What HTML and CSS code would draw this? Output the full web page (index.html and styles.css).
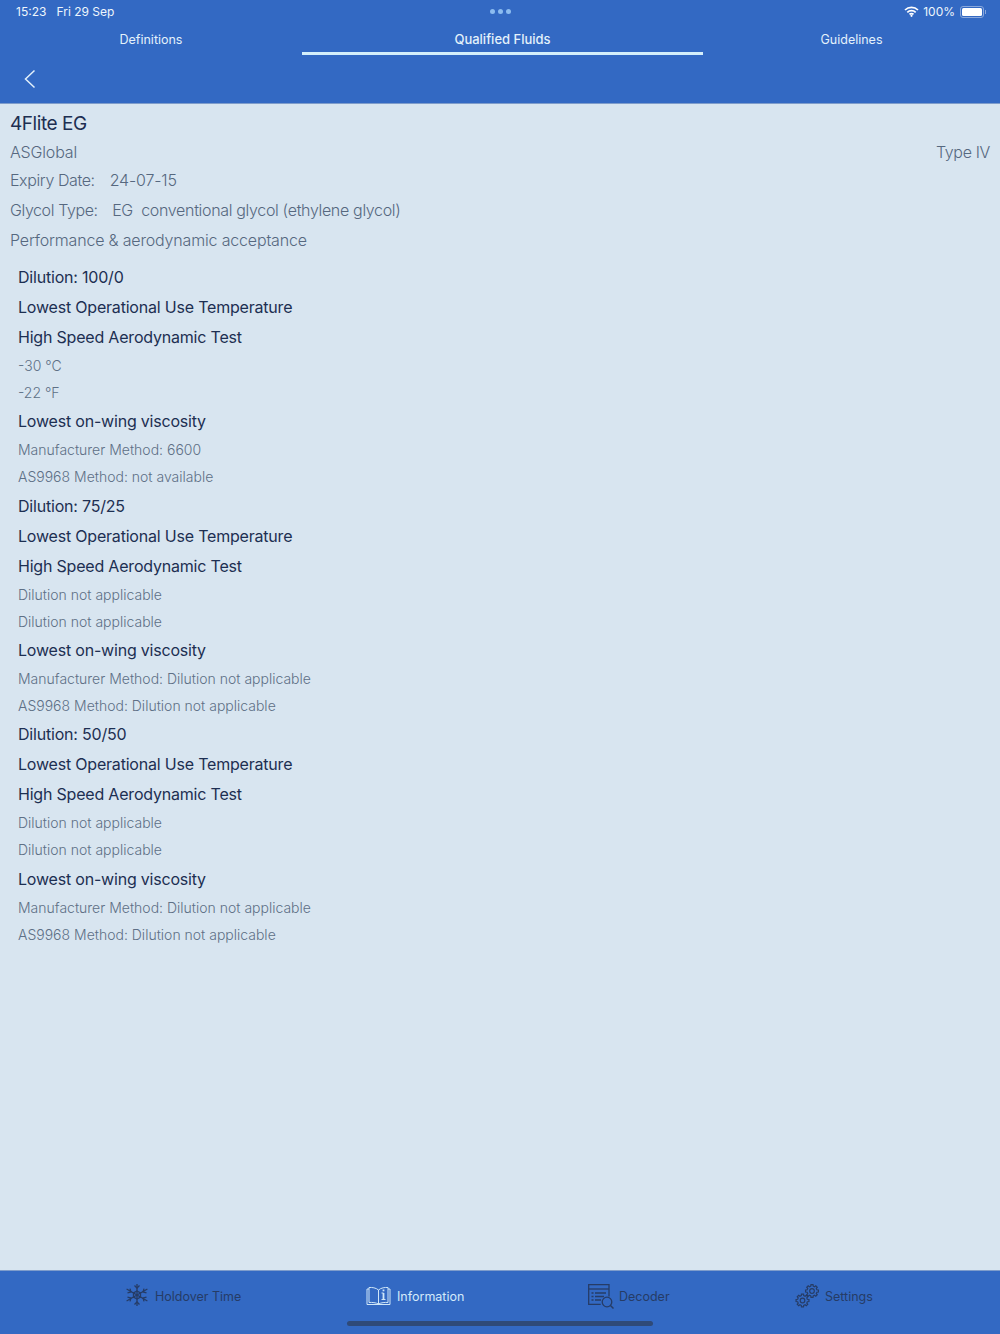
FILE: index.html
```html
<!DOCTYPE html>
<html lang="en">
<head>
    <meta charset="UTF-8">
    <meta name="viewport" content="width=device-width, initial-scale=1.0">
    <title>Qualified Fluids</title>
    <link rel="stylesheet" href="styles.css">
</head>
<body>
    <header class="topbar">
        <div class="status">
            <span class="status-left">15:23&nbsp;&nbsp; Fri 29 Sep</span>
            <span class="status-dots"><i></i><i></i><i></i></span>
            <span class="status-right">
                <svg class="wifi" width="15" height="11" viewBox="0 0 15 11"><path d="M1 4a9.2 9.2 0 0 1 13 0M3.300 6.300a6 6 0 0 1 8.400 0M5.500 8.400a2.800 2.800 0 0 1 4 0" fill="none" stroke="#fff" stroke-width="1.700"/><circle cx="7.500" cy="9.800" r="1.100" fill="#fff"/></svg>
                <span>100%</span>
                <span class="battery"><span class="battery-fill"></span></span>
            </span>
        </div>
        <nav class="tabs">
            <a class="tab">Definitions</a>
            <a class="tab tab-active">Qualified Fluids</a>
            <a class="tab">Guidelines</a>
        </nav>
        <div class="backrow">
            <svg width="12" height="20" viewBox="0 0 12 20"><path d="M10.500 1.500 1.500 10l9 8.500" fill="none" stroke="#e3f1fb" stroke-width="1.500"/></svg>
        </div>
    </header>

    <main class="content">
        <h1 class="title">4Flite EG</h1>
        <div class="row-between info"><span>ASGlobal</span><span class="fluid-type">Type IV</span></div>
        <div class="info expiry"><span class="label">Expiry Date:</span>&nbsp;&nbsp; 24-07-15</div>
        <div class="info glycol"><span class="label">Glycol Type:</span>&nbsp;&nbsp; EG&nbsp; conventional glycol (ethylene glycol)</div>
        <div class="info">Performance &amp; aerodynamic acceptance</div>

        <section class="dilutions">
            <h2 class="head">Dilution: 100/0</h2>
            <h2 class="head">Lowest Operational Use Temperature</h2>
            <h2 class="head">High Speed Aerodynamic Test</h2>
            <p class="val">-30 °C</p>
            <p class="val">-22 °F</p>
            <h2 class="head">Lowest on-wing viscosity</h2>
            <p class="val">Manufacturer Method: 6600</p>
            <p class="val">AS9968 Method: not available</p>

            <h2 class="head">Dilution: 75/25</h2>
            <h2 class="head">Lowest Operational Use Temperature</h2>
            <h2 class="head">High Speed Aerodynamic Test</h2>
            <p class="val">Dilution not applicable</p>
            <p class="val">Dilution not applicable</p>
            <h2 class="head">Lowest on-wing viscosity</h2>
            <p class="val">Manufacturer Method: Dilution not applicable</p>
            <p class="val">AS9968 Method: Dilution not applicable</p>

            <h2 class="head">Dilution: 50/50</h2>
            <h2 class="head">Lowest Operational Use Temperature</h2>
            <h2 class="head">High Speed Aerodynamic Test</h2>
            <p class="val">Dilution not applicable</p>
            <p class="val">Dilution not applicable</p>
            <h2 class="head">Lowest on-wing viscosity</h2>
            <p class="val">Manufacturer Method: Dilution not applicable</p>
            <p class="val">AS9968 Method: Dilution not applicable</p>
        </section>
    </main>

    <footer class="tabbar">
        <a class="bar-item item-hold">
            <svg width="24" height="24" viewBox="0 1 24 24" fill="none" stroke="#263c66" stroke-width="1.300">
                <path d="M12 1v22M1.600 6l20.800 12M22.400 6 1.600 18"/>
                <path d="M9.500 2.500 12 5l2.500-2.500M9.500 21.500 12 19l2.500 2.500M2.500 9.900l3.400-.9-.9-3.400M21.500 14.100l-3.400.9.900 3.400M21.500 9.900l-3.400-.9.900-3.400M2.500 14.100l3.400.9-.9 3.400"/>
                <path d="M12 8l3.500 2v4L12 16l-3.500-2v-4z"/>
            </svg>
            <span>Holdover Time</span>
        </a>
        <a class="bar-item item-active item-info">
            <svg width="25" height="20" viewBox="0 0 25 20" fill="none" stroke="#cfe6f8" stroke-width="1">
                <path d="M12.500 4C10 1.800 6 1.200 3 1.500v15c3-.3 7 .1 9.500 1.500 2.500-1.400 6.500-1.800 9.500-1.500v-15c-3-.3-7 .3-9.500 2.500zM12.500 4v15"/>
                <path d="M3 3H1v15.500h23V3h-2"/>
                <path d="M17.500 7v6.500" stroke-width="1.800"/>
                <path d="M15.500 7h2M15.500 13.500h4"/>
                <path d="M17.500 3.500v1.800" stroke-width="1.800"/>
            </svg>
            <span>Information</span>
        </a>
        <a class="bar-item item-decoder">
            <svg width="26" height="25" viewBox="0 0 26 25" fill="none" stroke="#263c66" stroke-width="1.300">
                <path d="M21 12.500V.7H.7v19.600h12"/>
                <path d="M.7 5h20.300"/>
                <path d="M3.500 9h2M7 9h11M3.500 12.500h2M7 12.500h9M3.500 16h2M7 16h6"/>
                <circle cx="19" cy="18" r="4.800"/>
                <path d="m22.500 21.500 3 3" stroke-width="1.500"/>
            </svg>
            <span>Decoder</span>
        </a>
        <a class="bar-item item-settings">
            <svg width="24" height="24" viewBox="0 0 24 24" fill="none" stroke="#263c66" stroke-width="1.200">
                <defs>
                    <g id="gear">
                        <path d="M6.420-1.020 6.420 1.020 4.850 1.210 4.290 2.580 5.260 3.820 3.820 5.260 2.580 4.290 1.210 4.850 1.020 6.420-1.020 6.420-1.210 4.850-2.580 4.290-3.820 5.260-5.260 3.820-4.290 2.580-4.850 1.210-6.420 1.020-6.420-1.020-4.850-1.210-4.290-2.580-5.260-3.820-3.820-5.260-2.580-4.290-1.210-4.850-1.020-6.420 1.020-6.420 1.210-4.850 2.580-4.290 3.820-5.260 5.260-3.820 4.290-2.580 4.850-1.210Z"/>
                        <circle r="2.300"/>
                    </g>
                </defs>
                <use href="#gear" x="17" y="7"/>
                <use href="#gear" x="7.500" y="16.500"/>
            </svg>
            <span>Settings</span>
        </a>
        <div class="home-indicator"></div>
    </footer>
</body>
</html>
```

FILE: styles.css
```css
html, body {
    height: 100%;
    margin: 0;
    padding: 0;
    overflow: hidden;
}

body {
    font-family: Inter, "Liberation Sans", sans-serif;
    background: #d8e5f0;
    display: flex;
    flex-direction: column;
    color: #1d2f52;
}

.topbar {
    background: #3369c3;
    height: 104px;
    box-sizing: border-box;
    border-bottom: 1px solid #7f9dcb;
    flex: none;
    color: #e3f1fb;
}

.status {
    height: 23px;
    padding: 0 16px 0 16px;
    display: grid;
    grid-template-columns: 1fr auto 1fr;
    align-items: center;
    font-size: 12px;
    color: #eef6fc;
}

.status-dots {
    display: flex;
    gap: 3px;
}

.status-dots i {
    width: 5px;
    height: 5px;
    border-radius: 50%;
    background: #8cbcf0;
}

.status-right {
    justify-self: end;
    display: flex;
    align-items: center;
    gap: 4px;
}

.battery {
    width: 24px;
    height: 12px;
    box-sizing: border-box;
    border: 1px solid #8aa8dc;
    border-radius: 3px;
    padding: 1px;
    display: flex;
    margin-left: 1px;
    position: relative;
}

.battery::after {
    content: "";
    position: absolute;
    right: -3px;
    top: 3px;
    width: 1px;
    height: 4px;
    background: #8aa8dc;
}

.battery-fill {
    flex: 1;
    background: #fff;
    border-radius: 1.500px;
}

.tabs {
    display: grid;
    grid-template-columns: 302px 401px 1fr;
    height: 32px;
    font-size: 12.500px;
    text-align: center;
}

.tab {
    padding-top: 9px;
    box-sizing: border-box;
    height: 32px;
}

.tab-active {
    border-bottom: 3px solid #d4effb;
    padding-top: 8px;
    font-size: 13px;
    font-weight: 500;
}

.backrow {
    padding: 14px 0 0 24px;
}

.content {
    flex: 1;
    padding: 8px 10px 0;
}

.title {
    margin: 0;
    font-size: 19px;
    font-weight: 400;
    line-height: 23px;
    letter-spacing: -0.45px;
    color: #1d2f52;
}

.info {
    font-size: 16px;
    font-weight: 300;
    line-height: 30px;
    letter-spacing: -0.17px;
    color: #56687f;
}

.row-between {
    display: flex;
    justify-content: space-between;
    margin-top: 2px;
}

.fluid-type {
    letter-spacing: -0.35px;
}

.expiry {
    margin-top: -2px;
}

.glycol {
    letter-spacing: -0.33px;
}

.label {
    letter-spacing: -0.4px;
    margin-right: 2px;
}

.dilutions {
    padding: 7px 8px 0;
}

.head {
    margin: 0;
    font-size: 16px;
    font-weight: 400;
    line-height: 30px;
    letter-spacing: -0.2px;
    color: #1d2f52;
}

.val {
    margin: 0;
    font-size: 14px;
    font-weight: 300;
    line-height: 27.150px;
    color: #5e7086;
}

.tabbar {
    background: #3369c3;
    border-top: 1px solid #7f9dcb;
    height: 64px;
    box-sizing: border-box;
    flex: none;
    position: relative;
    display: flex;
    align-items: flex-start;
    font-size: 12.500px;
    color: #263c66;
}

.bar-item {
    display: flex;
    align-items: center;
    gap: 6px;
    height: 50px;
    position: absolute;
    top: 0;
}

.item-hold { left: 125px; }
.item-info { left: 366px; }
.item-decoder { left: 588px; gap: 5px; }
.item-settings { left: 795px; }

.item-active {
    color: #d4e9fa;
}

.home-indicator {
    position: absolute;
    left: 347px;
    width: 306px;
    height: 5px;
    bottom: 8px;
    background: #2f4a78;
    border-radius: 3px;
}
```
